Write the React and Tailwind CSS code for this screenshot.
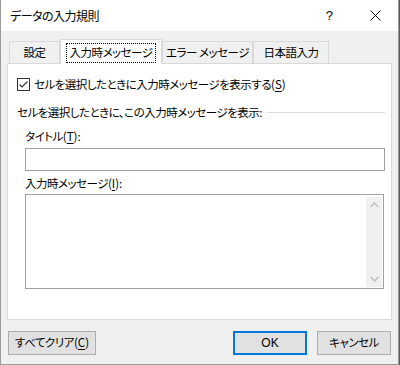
import React from 'react';

const font = "[font-family:'Noto_Sans_CJK_JP','Noto_Sans',sans-serif] [font-feature-settings:'palt'] tracking-[-0.5px]";

function Key({ k }) {
  return <span className="tracking-normal">(<span className="underline underline-offset-2">{k}</span>)</span>;
}

export default function App() {
  const tabs = [
    { label: '設定', w: 'w-[51px]' },
    { label: '入力時メッセージ', w: 'w-[102px]', active: true },
    { label: 'エラー メッセージ', w: 'w-[91px]' },
    { label: '日本語入力', w: 'w-[76px]' },
  ];

  return (
    <div className={`w-[400px] h-[365px] bg-[#5b5b5b] text-[11.5px] text-black leading-none ${font}`}>
      <div className="w-[399px] h-[365px] flex flex-col border-l border-r border-b border-[#9a9a9a] bg-[#f0f0f0]">

        {/* Title bar */}
        <div className="h-[31px] bg-white flex items-center shrink-0">
          <span className="pl-[9px] text-[12px]">データの入力規則</span>
          <span className="ml-auto mr-[37px] text-[13px] tracking-normal [font-family:'Liberation_Sans',sans-serif]">?</span>
          <svg width="11" height="11" viewBox="0 0 11 11" className="mr-[17px]">
            <path d="M0.5 0.5 L10.5 10.5 M10.5 0.5 L0.5 10.5" stroke="#000" strokeWidth="1" />
          </svg>
        </div>

        {/* Tabs */}
        <div className="px-[6px] pt-[8px]">
          <div className="flex items-end pl-[2px] h-[24px]">
            {tabs.map(t => (
              <div
                key={t.label}
                className={`${t.w} flex items-center justify-center whitespace-nowrap border border-b-0 border-[#d9d9d9] ${t.active ? 'h-[25px] bg-white relative z-10 -mb-px' : 'h-[22px] bg-[#f0f0f0]'}`}
              >
                {t.active ? (
                  <span className="px-[4px] py-[4px] outline outline-1 outline-dotted outline-black -outline-offset-1 mt-[2px]">{t.label}</span>
                ) : (
                  <span className="mt-[1px]">{t.label}</span>
                )}
              </div>
            ))}
          </div>

          {/* Panel */}
          <div className="h-[257px] bg-white border border-[#d9d9d9] pl-[9px] pr-[6px] pt-[14px]">
            <div className="flex items-center gap-[4px] h-[13px]">
              <div className="w-[13px] h-[13px] border border-[#333] flex items-center justify-center">
                <svg width="11" height="11" viewBox="0 0 11 11">
                  <path d="M1.5 5.5 L4 8 L9.5 2.5" stroke="#333" strokeWidth="1.2" fill="none" />
                </svg>
              </div>
              <span>セルを選択したときに入力時メッセージを表示する<Key k="S" /></span>
            </div>

            <div className="flex items-center mt-[15px] h-[13px]">
              <span className="whitespace-nowrap">セルを選択したときに、この入力時メッセージを表示:</span>
              <div className="flex-1 h-px bg-[#dcdcdc] ml-[5px]" />
            </div>

            <div className="pl-[8px]">
              <div className="mt-[11px] h-[13px] flex items-center">
                <span>タイトル<Key k="T" />:</span>
              </div>
              <div className="mt-[5px] h-[23px] border border-[#a0a0a0] bg-white" />

              <div className="mt-[6px] h-[13px] flex items-center">
                <span>入力時メッセージ<Key k="I" />:</span>
              </div>
              <div className="mt-[4px] h-[95px] w-[359px] border border-[#a0a0a0] bg-white flex justify-end pt-[2px] pb-[1px] pr-[1px]">
                <div className="w-[16px] h-full bg-[#f0f0f0] flex flex-col items-center justify-between py-[5px]">
                  <svg width="9" height="6" viewBox="0 0 9 6">
                    <path d="M0.5 5 L4.5 1 L8.5 5" stroke="#bfbfbf" strokeWidth="1.5" fill="none" />
                  </svg>
                  <svg width="9" height="6" viewBox="0 0 9 6">
                    <path d="M0.5 1 L4.5 5 L8.5 1" stroke="#bfbfbf" strokeWidth="1.5" fill="none" />
                  </svg>
                </div>
              </div>
            </div>
          </div>
        </div>

        {/* Buttons */}
        <div className="flex items-center px-[7px] mt-[11px]">
          <button className="w-[88px] h-[24px] bg-[#e1e1e1] border border-[#adadad] flex items-center justify-center">
            <span>すべてクリア<Key k="C" /></span>
          </button>
          <button className="ml-auto w-[74px] h-[24px] bg-[#e1e1e1] border-2 border-[#0078d7] flex items-center justify-center tracking-normal [font-family:'Liberation_Sans',sans-serif] text-[12px]">
            OK
          </button>
          <button className="ml-[10px] w-[74px] h-[24px] bg-[#e1e1e1] border border-[#adadad] flex items-center justify-center">
            キャンセル
          </button>
        </div>
      </div>
    </div>
  );
}
